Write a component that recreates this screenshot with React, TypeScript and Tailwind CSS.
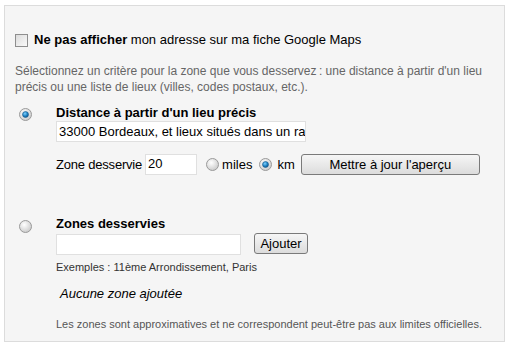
import React from "react";

function Radio({ checked }: { checked?: boolean }) {
  return (
    <svg width="13" height="13" viewBox="0 0 13 13" className="shrink-0">
      <defs>
        <radialGradient id={checked ? "rgc" : "rgu"} cx="40%" cy="35%" r="70%">
          <stop offset="0%" stopColor="#ffffff" />
          <stop offset="100%" stopColor="#c8c8c8" />
        </radialGradient>
        <radialGradient id="dot" cx="40%" cy="35%" r="70%">
          <stop offset="0%" stopColor="#7fd0ff" />
          <stop offset="60%" stopColor="#1a7fc0" />
          <stop offset="100%" stopColor="#0a4f86" />
        </radialGradient>
      </defs>
      <circle cx="6.5" cy="6.5" r="6" fill={`url(#${checked ? "rgc" : "rgu"})`} stroke="#9a9a9a" strokeWidth="1" />
      {checked && <circle cx="6.5" cy="6.5" r="3" fill="url(#dot)" stroke="#1d5d8f" strokeWidth="0.6" />}
    </svg>
  );
}

export default function App() {
  return (
    <div className="w-[511px] h-[347px] bg-white pt-[5px] pl-[4px]" style={{ fontFamily: '"Liberation Sans", Arial, sans-serif' }}>
      <div className="w-[501px] h-[337px] bg-[#f5f5f5] border border-[#dcdcdc] pl-[10px] pr-[10px] pt-[26px] text-[13px] text-black">
        <label className="flex items-center h-[16px]">
          <span className="w-[13px] h-[13px] border border-[#8e8e8e] bg-gradient-to-br from-[#dcdcdc] to-[#fafafa] mr-[6px] shrink-0" />
          <span><b>Ne pas afficher</b> mon adresse sur ma fiche Google Maps</span>
        </label>
        <p className="mt-[15px] text-[12px] leading-[16px] text-[#666]">
          Sélectionnez un critère pour la zone que vous desservez&#8239;: une distance à partir d'un lieu précis ou une liste de lieux (villes, codes postaux, etc.).
        </p>

        <div className="flex mt-[10px]">
          <div className="w-[41px] pl-[4px] pt-[3px]"><Radio checked /></div>
          <div className="flex flex-col">
            <div className="font-bold leading-[16px]">Distance à partir d'un lieu précis</div>
            <div className="w-[250px] h-[21px] bg-white border border-[#e0e0e0] overflow-hidden whitespace-nowrap pl-[2px] leading-[19px]">
              33000 Bordeaux, et lieux situés dans un ra
            </div>
            <div className="flex items-center mt-[12px]">
              <span className="mr-[3px] tracking-[-0.2px]">Zone desservie</span>
              <div className="w-[52px] h-[21px] bg-white border border-[#e0e0e0] pl-[2px] leading-[17px]">20</div>
              <span className="ml-[9px] mr-[3px]"><Radio /></span>
              <span>miles</span>
              <span className="ml-[7px] mr-[5px]"><Radio checked /></span>
              <span>km</span>
              <button className="ml-[6px] w-[179px] h-[21px] border border-[#7a7a7a] rounded-[3px] bg-gradient-to-b from-[#f6f6f6] to-[#dcdcdc] text-[13px] leading-[17px]">
                Mettre à jour l'aperçu
              </button>
            </div>
          </div>
        </div>

        <div className="flex mt-[41px]">
          <div className="w-[41px] pl-[4px] pt-[4px]"><Radio /></div>
          <div className="flex flex-col">
            <div className="font-bold leading-[16px]">Zones desservies</div>
            <div className="flex items-start mt-[2px]">
              <div className="w-[185px] h-[21px] bg-white border border-[#e0e0e0]" />
              <button className="ml-[13px] -mt-[1px] w-[54px] h-[21px] border border-[#7a7a7a] rounded-[3px] bg-gradient-to-b from-[#f6f6f6] to-[#dcdcdc] text-[13px] leading-[17px]">
                Ajouter
              </button>
            </div>
            <div className="text-[11px] leading-[14px] mt-[5px] text-[#333]">Exemples : 11ème Arrondissement, Paris</div>
            <div className="italic mt-[12px] ml-[4px] leading-[16px]">Aucune zone ajoutée</div>
            <div className="text-[11px] leading-[14px] mt-[15px] text-[#555]">Les zones sont approximatives et ne correspondent peut-être pas aux limites officielles.</div>
          </div>
        </div>
      </div>
    </div>
  );
}
